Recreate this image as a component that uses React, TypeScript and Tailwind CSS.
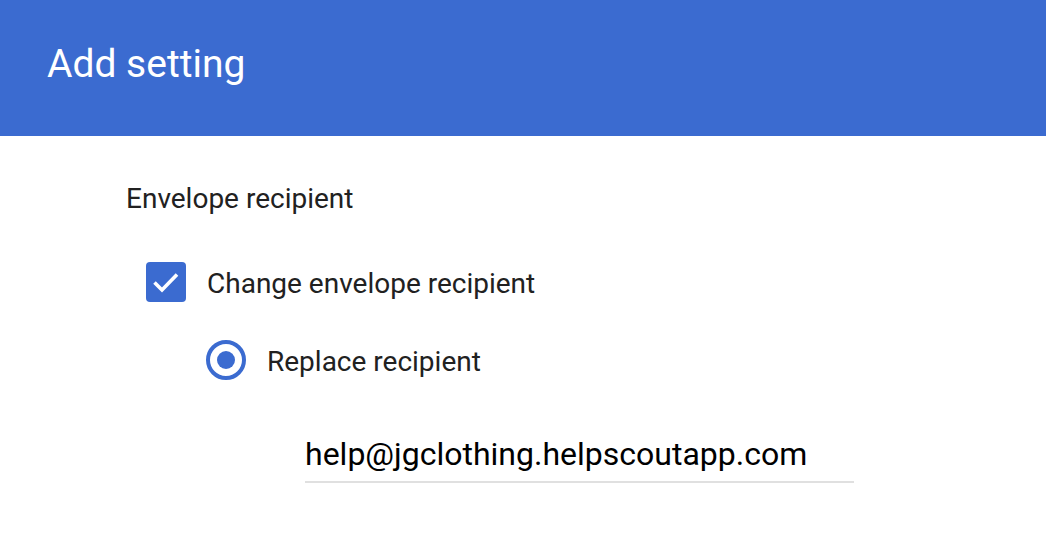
export default function App() {
  return (
    <div className="w-[1046px] h-[554px] bg-white overflow-hidden" style={{ fontFamily: "Roboto, sans-serif" }}>
      <div className="h-[136px] bg-[#3b6bd0] flex items-center pl-[47px] pb-[8px]">
        <h1 className="text-white text-[39px] leading-none font-normal">Add setting</h1>
      </div>
      <div className="pl-[126px] pt-[48px]">
        <div className="text-[28px] leading-[30px] text-[#212121]">Envelope recipient</div>
        <div className="flex items-center pl-[20px] mt-[48px] gap-[21px]">
          <div className="w-[40px] h-[40px] rounded-[4px] bg-[#3b6bd0] flex items-center justify-center">
            <svg width="40" height="40" viewBox="0 0 40 40" fill="none">
              <path d="M8.5 20.5l7.5 7.5L31 12.5" stroke="white" strokeWidth="3.6" />
            </svg>
          </div>
          <span className="text-[28px] leading-[30px] text-[#212121] pt-[3px]">Change envelope recipient</span>
        </div>
        <div className="flex items-center pl-[80px] mt-[38px] gap-[21px]">
          <div className="w-[40px] h-[40px] rounded-full border-[4px] border-[#3b6bd0] flex items-center justify-center">
            <div className="w-[18px] h-[18px] rounded-full bg-[#3b6bd0]" />
          </div>
          <span className="text-[28px] leading-[30px] text-[#212121] pt-[3px]">Replace recipient</span>
        </div>
        <div className="ml-[179px] mt-[56px] w-[549px] border-b-2 border-[#e0e0e0] pb-[9px]">
          <span className="text-[32px] leading-[36px] text-black">help@jgclothing.helpscoutapp.com</span>
        </div>
      </div>
    </div>
  );
}
